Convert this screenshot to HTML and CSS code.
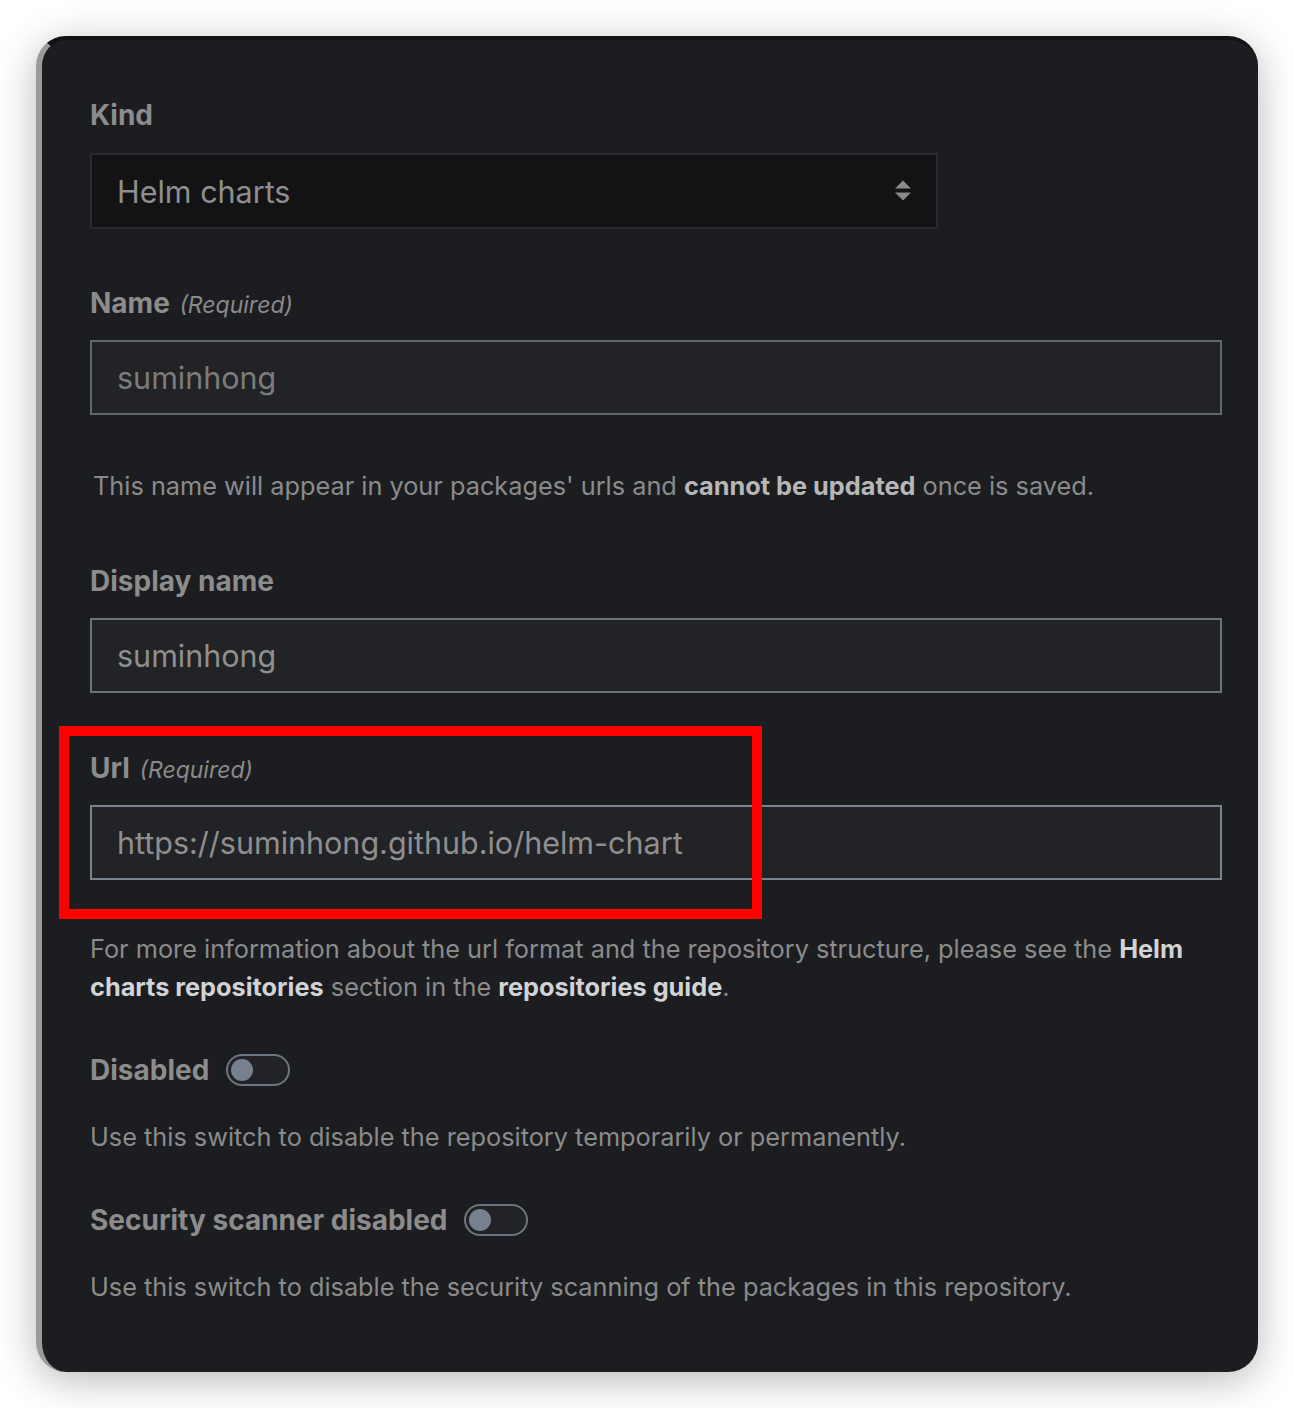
FILE: index.html
```html
<!DOCTYPE html>
<html lang="en">
<head>
<meta charset="utf-8">
<title>Repository form</title>
<link rel="stylesheet" href="styles.css">
</head>
<body>
<div class="card">
  <div class="field field-kind">
    <div class="label">Kind</div>
    <div class="select">
      <span class="select-value">Helm charts</span>
      <svg class="select-arrows" width="18" height="22" viewBox="0 0 18 22"><path d="M1 8.5 L9 0.5 L17 8.5 Z" fill="#8a8a8a"/><path d="M1 12.5 L9 20.5 L17 12.5 Z" fill="#8a8a8a"/></svg>
    </div>
  </div>

  <div class="field field-name">
    <div class="label">Name <span class="req">(Required)</span></div>
    <div class="input placeholder">suminhong</div>
    <p class="hint hint-indent">This name will appear in your packages' urls and <b class="strong-dim">cannot be updated</b> once is saved.</p>
  </div>

  <div class="field field-display">
    <div class="label">Display name</div>
    <div class="input">suminhong</div>
  </div>

  <div class="field field-url">
    <div class="highlight"></div>
    <div class="label">Url <span class="req">(Required)</span></div>
    <div class="input">https://suminhong.github.io/helm-chart</div>
    <p class="hint hint-url">For more information about the url format and the repository structure, please see the <b class="strong">Helm charts repositories</b> section in the <b class="strong">repositories guide</b>.</p>
  </div>

  <div class="switch-row switch-disabled">
    <span class="label label-inline">Disabled</span>
    <span class="toggle"><span class="knob"></span></span>
  </div>
  <p class="hint hint-switch">Use this switch to disable the repository temporarily or permanently.</p>

  <div class="switch-row switch-security">
    <span class="label label-inline">Security scanner disabled</span>
    <span class="toggle"><span class="knob"></span></span>
  </div>
  <p class="hint hint-switch">Use this switch to disable the security scanning of the packages in this repository.</p>
</div>
</body>
</html>
```

FILE: styles.css
```css
html, body {
  margin: 0;
  padding: 0;
  background: #ffffff;
}
body {
  padding: 36px 36px 36px 36px;
  font-family: Inter, "Noto Sans", "Liberation Sans", sans-serif;
}
.card {
  box-sizing: border-box;
  width: 1222px;
  height: 1336px;
  background: #1c1d21;
  border-radius: 30px;
  border-left: 6px solid #9b9b9b;
  border-top: 4px solid #121214;
  box-shadow: 0 8px 40px rgba(0, 0, 0, 0.28);
  padding: 58px 36px 0 48px;
  color: #8b8b8b;
}
.label {
  font-size: 28px;
  line-height: 34px;
  height: 34px;
  font-weight: 700;
  color: #8c8c8c;
}
.req {
  font-size: 23px;
  line-height: 1;
  font-weight: 400;
  font-style: italic;
  margin-left: 3px;
  color: #8a8a8a;
}
.field {
  position: relative;
}
.select {
  box-sizing: border-box;
  margin-top: 21px;
  width: 848px;
  height: 76px;
  background: #131315;
  border: 2px solid #2a2b2f;
  display: flex;
  align-items: center;
  justify-content: space-between;
  padding: 0 24px 0 25px;
}
.select-value, .input {
  font-size: 30.5px;
  color: #8f8f8f;
}
.select-arrows {
  display: block;
}
.field-name {
  margin-top: 57px;
}
.input {
  box-sizing: border-box;
  margin-top: 20px;
  width: 1132px;
  height: 75px;
  background: #222326;
  border: 2px solid #6c727c;
  display: flex;
  align-items: center;
  padding: 0 25px;
}
.input.placeholder {
  color: #7c7c7c;
  border-color: #62676f;
}
.hint {
  margin: 0;
  font-size: 25.3px;
  line-height: 38px;
  color: #8b8b8b;
}
.hint-indent {
  margin-top: 52px;
  padding-left: 3px;
}
.strong-dim {
  color: #b7b7b7;
  font-weight: 700;
}
.strong {
  color: #d2d3d5;
  font-weight: 700;
}
.field-display {
  margin-top: 59px;
}
.field-url {
  margin-top: 58px;
}
.field-url .input {
  border-color: #7a828e;
}
.hint-url {
  margin-top: 50px;
  width: 1120px;
}
.highlight {
  position: absolute;
  left: -31px;
  top: -25px;
  width: 703px;
  height: 193px;
  box-sizing: border-box;
  border: 10px solid #ff0000;
  pointer-events: none;
}
.switch-row {
  display: flex;
  align-items: center;
  height: 34px;
}
.switch-disabled {
  margin-top: 47px;
}
.switch-security {
  margin-top: 47px;
}
.label-inline {
  margin-right: 17px;
}
.toggle {
  box-sizing: border-box;
  width: 64px;
  height: 32px;
  border: 2px solid #6d7682;
  border-radius: 16px;
  background: #222326;
  display: flex;
  align-items: center;
  padding-left: 3px;
}
.knob {
  width: 22px;
  height: 22px;
  border-radius: 50%;
  background: #76808e;
}
.hint-switch {
  margin-top: 31px;
}
```
